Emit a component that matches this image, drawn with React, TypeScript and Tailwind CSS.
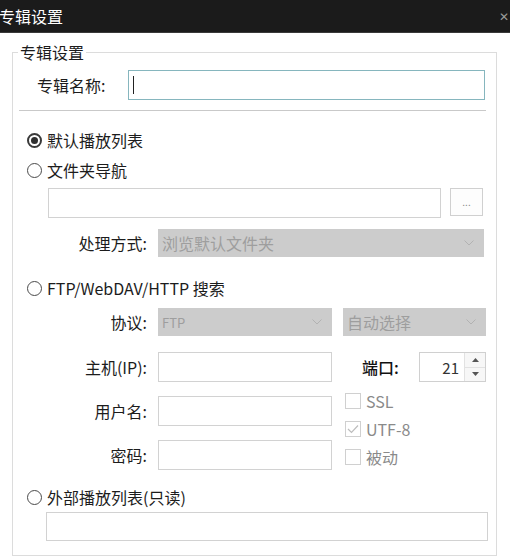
import React from "react";

const font = { fontFamily: '"Noto Sans CJK SC", "Noto Sans", sans-serif' };

function Chevron() {
  return (
    <svg width="10" height="6" viewBox="0 0 10 6" className="shrink-0">
      <polyline points="0.5,0.5 5,5 9.5,0.5" fill="none" stroke="#b2b2b2" strokeWidth="1" />
    </svg>
  );
}

function Radio({ checked, label }: { checked?: boolean; label: string }) {
  return (
    <div className="flex h-[24px] items-center pl-[14px]">
      <span
        className={`flex h-[15px] w-[15px] shrink-0 items-center justify-center rounded-full bg-white ${
          checked ? "border-2 border-[#3a3a3a]" : "border border-[#4a4a4a]"
        }`}
      >
        {checked && <span className="h-[7px] w-[7px] rounded-full bg-[#2f2f2f]" />}
      </span>
      <span className="ml-[5px] text-[16px] leading-none text-[#1c1c1c]">{label}</span>
    </div>
  );
}

function Select({ width, value, small }: { width: string; value: string; small?: boolean }) {
  return (
    <div className={`flex h-[28px] items-center justify-between bg-[#cccccc] pl-[4px] pr-[10px] ${width}`}>
      <span className={`${small ? "text-[13px]" : "text-[16px]"} leading-none text-[#9e9e9e]`}>{value}</span>
      <Chevron />
    </div>
  );
}

function Label({ text }: { text: string }) {
  return (
    <span className="w-[145px] shrink-0 pr-[11px] text-right text-[16px] leading-none text-[#1c1c1c]">{text}</span>
  );
}

function Check({ label, checked }: { label: string; checked?: boolean }) {
  return (
    <div className="flex h-[28px] items-center">
      <span className="flex h-[16px] w-[16px] items-center justify-center border border-[#d0d0d0] bg-white">
        {checked && (
          <svg width="12" height="10" viewBox="0 0 12 10">
            <polyline points="1,5 4.5,8.5 11,1.5" fill="none" stroke="#bdbdbd" strokeWidth="1.2" />
          </svg>
        )}
      </span>
      <span className="ml-[5px] text-[16px] leading-none text-[#8a8a8a]">{label}</span>
    </div>
  );
}

export default function App() {
  return (
    <div className="h-[557px] w-[510px] overflow-hidden bg-white" style={font}>
      {/* title bar */}
      <div className="flex h-[33px] items-center justify-between border-b border-[#3a3a3a] bg-[#1b1b1b]">
        <span className="-ml-[1px] text-[16px] leading-none text-white">专辑设置</span>
        <span className="mr-[1px] text-[12px] leading-none text-[#9a9a9a]">✕</span>
      </div>

      <fieldset className="ml-[12px] mt-[8px] h-[515px] w-[485px] border border-[#dcdcdc]">
        <legend className="ml-[5px] px-[2px] text-[16px] leading-[22px] text-[#1c1c1c]">专辑设置</legend>

        {/* album name */}
        <div className="mt-[7px] flex h-[30px] items-center">
          <span className="ml-[24px] w-[91px] text-[16px] leading-none text-[#1c1c1c]">专辑名称:</span>
          <div className="flex h-[30px] w-[357px] items-center border border-[#86b6be] bg-white pl-[4px]">
            <span className="h-[18px] w-px bg-[#222]" />
          </div>
        </div>

        <div className="ml-[6px] mt-[10px] h-[2px] w-[467px] border-t border-[#c9c9c9] bg-white" />

        <div className="mt-[16px]">
          <Radio checked label="默认播放列表" />
        </div>
        <div className="mt-[6px]">
          <Radio label="文件夹导航" />
        </div>

        {/* folder */}
        <div className="ml-[35px] mt-[6px] flex items-start">
          <div className="h-[30px] w-[393px] border border-[#d2d2d2] bg-white" />
          <div className="ml-[9px] flex h-[28px] w-[33px] items-center justify-center border border-[#d0d0d0] bg-[#fdfdfd] text-[10px] leading-none text-[#8a8a8a]">
            ...
          </div>
        </div>

        <div className="mt-[11px] flex items-center">
          <Label text="处理方式:" />
          <Select width="w-[326px]" value="浏览默认文件夹" />
        </div>

        <div className="mt-[19px]">
          <Radio label="FTP/WebDAV/HTTP 搜索" />
        </div>

        <div className="mt-[8px] flex items-center">
          <Label text="协议:" />
          <Select width="w-[174px]" value="FTP" small />
          <div className="ml-[11px]">
            <Select width="w-[143px]" value="自动选择" />
          </div>
        </div>

        {/* host + port */}
        <div className="mt-[16px] flex items-center">
          <Label text="主机(IP):" />
          <div className="h-[30px] w-[174px] border border-[#d2d2d2] bg-white" />
          <span className="ml-[30px] w-[57px] text-[16px] font-medium leading-none text-[#111]">端口:</span>
          <div className="flex h-[30px] w-[67px] border border-[#d0d0d0] bg-white">
            <span className="flex flex-1 items-center justify-end pr-[5px] text-[15px] leading-none text-[#333]">21</span>
            <div className="flex w-[21px] flex-col border-l border-[#e2e2e2] bg-[#f7f7f7]">
              <span className="flex flex-1 items-center justify-center border-b border-[#e2e2e2]">
                <svg width="7" height="4" viewBox="0 0 7 4">
                  <polygon points="3.5,0 7,4 0,4" fill="#555" />
                </svg>
              </span>
              <span className="flex flex-1 items-center justify-center">
                <svg width="7" height="4" viewBox="0 0 7 4">
                  <polygon points="0,0 7,0 3.5,4" fill="#555" />
                </svg>
              </span>
            </div>
          </div>
        </div>

        {/* user / password + options */}
        <div className="mt-[5px] flex items-start">
          <div className="flex flex-col">
            <div className="mt-[9px] flex items-center">
              <Label text="用户名:" />
              <div className="h-[30px] w-[174px] border border-[#d2d2d2] bg-white" />
            </div>
            <div className="mt-[14px] flex items-center">
              <Label text="密码:" />
              <div className="h-[30px] w-[174px] border border-[#d2d2d2] bg-white" />
            </div>
          </div>
          <div className="ml-[13px] flex flex-col">
            <Check label="SSL" />
            <Check label="UTF-8" checked />
            <Check label="被动" />
          </div>
        </div>

        <div className="mt-[14px]">
          <Radio label="外部播放列表(只读)" />
        </div>

        <div className="ml-[33px] mt-[3px] h-[29px] w-[442px] border border-[#d2d2d2] bg-white" />
      </fieldset>
    </div>
  );
}
